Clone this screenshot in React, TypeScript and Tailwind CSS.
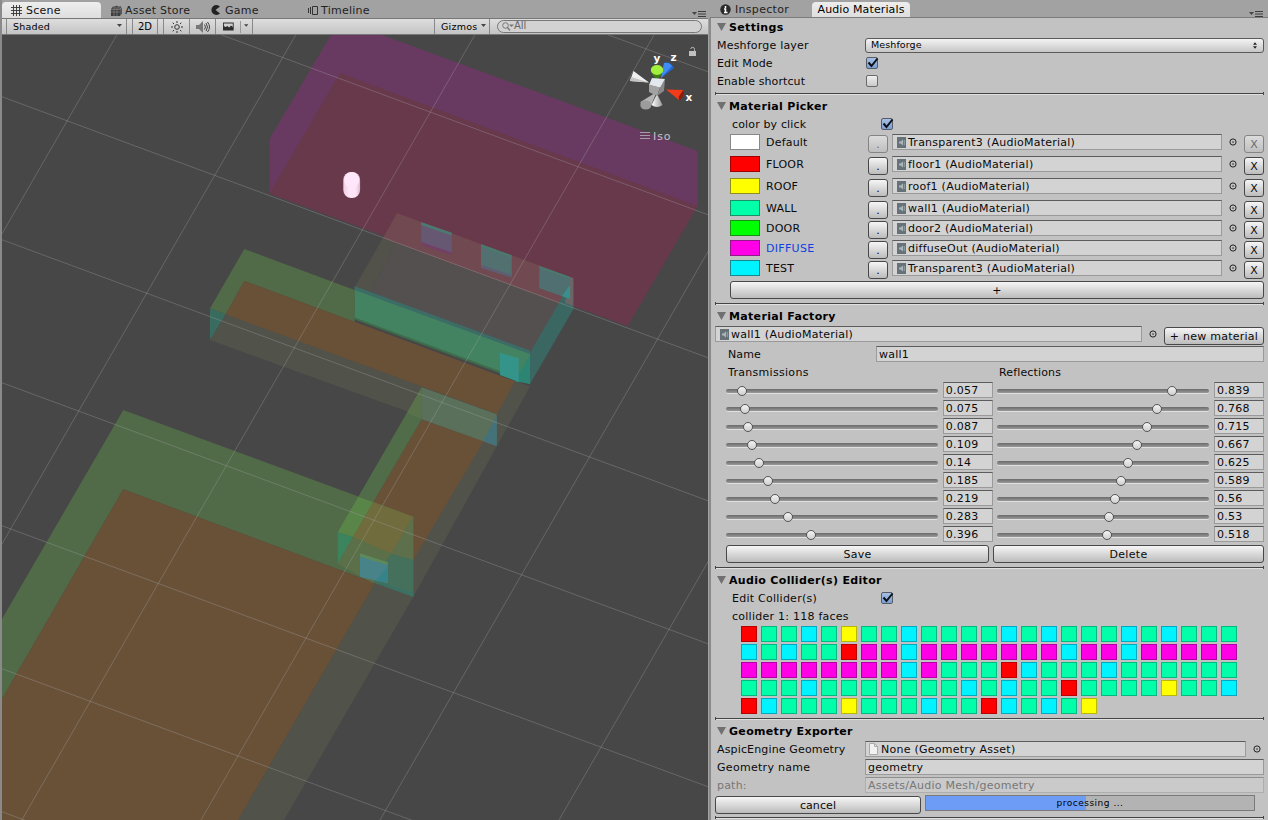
import React from "react";

const poly = (pts: string, fill: string, key?: React.Key) => <polygon key={key} points={pts} fill={fill} />;

const SHAPES: [string, string][] = [
  ["331,35 382,35 697.5,151 697.5,206 627.5,326 269.5,193.5 269.5,139", "#693a61"],
  ["340,73 697.5,206 627.5,326 269.5,193.5", "#68384b"],
  ["210,340 226,314 496.7,414 484,442 421,419 413,413.5", "#51524a"],
  ["515,381 530,386.5 413.3,596.7 284,820 238,820 375,583", "#51524a"],
  ["244.3,249 354.7,290 354.7,322 244.3,281 225.7,314.3 210,308.5", "#516b48"],
  ["244.3,281 515,381.3 496.7,414 225.7,314.3", "#695138"],
  ["210,308.5 225.7,314.3 210,340", "#3a6b5f"],
  ["397,213 573.3,278 573.3,309.3 383,238", "#704a50"],
  ["383,238 396,243 371,292 354.7,287", "#52514a"],
  ["396,243 568,306 530,352.7 371,292", "#545050"],
  ["573.3,280 573.3,309.3 530,384 530,352.7 563,296", "#3b6762"],
  ["570,277 573.3,278 573.3,306 565,303", "#6a6567"],
  ["354.7,286.7 530,352.7 530,384 354.7,319", "#438361"],
  ["354.7,286 530,350.5 530,354 354.7,290", "#3d6b65"],
  ["354.7,317.5 530,382 530,384.5 354.7,319.5", "#3e6c4a"],
  ["530,354.5 530,384 515,381.3", "#2c8573"],
  ["421.3,222.3 451.7,232.7 451.7,254.7 421.3,244", "#665872"],
  ["421.3,222.3 451.7,232.7 451.7,235.5 421.3,225", "#4c7a70"],
  ["421.3,242 451.7,252.5 451.7,255 421.3,245", "#743f66"],
  ["481,244.3 511.7,255.3 511.7,277.3 481,267.3", "#51706f"],
  ["481,244.3 511.7,255.3 511.7,257.5 481,246.5", "#4a7a6e"],
  ["481,265 511.7,275 511.7,277.5 481,268", "#5e5d72"],
  ["539.3,266 570,277 570,299 539.3,288.3", "#4f6f70"],
  ["539.3,266 570,277 570,279 539.3,268", "#4a7a6e"],
  ["570,285 570,299 562,296", "#38908d"],
  ["500,352.7 518.7,358.3 518.7,382 500,375", "#35948a"],
  ["421.7,419.3 496.7,446 483.3,441.7 413.3,560 375,583 353,537", "#695138"],
  ["421.7,387.3 421.7,419.3 353,537 337.7,532.3", "#506c48"],
  ["421.7,387.3 421.7,419.3 407,413", "#59724b"],
  ["421.7,387.3 496.7,414.3 496.7,446 421.7,419.3", "#5a705b"],
  ["496.7,416 496.7,446 483,441", "#44727a"],
  ["123.3,410 413.3,516.7 413.3,596.7 375,583 123.3,489.3 2,699 2,619", "#516a48"],
  ["123.3,489.3 375,583 238,820 2,820 2,699", "#695138"],
  ["358.3,496.7 373.3,502 353,537 337.7,532.3", "#5a8548"],
  ["373.3,502 413.3,516.7 391,554 353,537", "#706c3d"],
  ["413.3,516.7 413.3,560 391,554", "#5d704b"],
  ["391,554 413.3,560 413.3,596.7 373,582", "#44705c"],
  ["375,581 413.3,593 413.3,596.7 378,584", "#3b7064"],
  ["337.7,532.3 353,537 337.7,564", "#3b845d"],
  ["353,537 391,553.5 373,583 337.7,564", "#5b6f49"],
  ["360,553.5 387.7,562.3 387.7,583 360,577", "#48838a"],
  ["360,553.5 387.7,562.3 387.7,565 360,556.5", "#5f8a58"],
  ["387.7,566 387.7,583 376,581", "#36848a"],
];

function SceneView() {
  return (
    <svg className="block" width="706" height="785" viewBox="2 35 706 785">
      <defs>
        <linearGradient id="cap" x1="0" x2="1"><stop offset="0" stopColor="#f0cfe4" /><stop offset=".35" stopColor="#ffe6f9" /><stop offset=".75" stopColor="#ffe4f6" /><stop offset="1" stopColor="#d9bccd" /></linearGradient>
        <linearGradient id="grey" x1="0" x2="1"><stop offset="0" stopColor="#fff" /><stop offset="1" stopColor="#9a9a9a" /></linearGradient>
      </defs>
      <rect x="2" y="35" width="706" height="785" fill="#474747" />
      {SHAPES.map(([p, f], i) => poly(p, f, i))}
      <g stroke="#a8a8a8" strokeOpacity=".33" strokeWidth="1">
        {[-190, -47, 96, 239, 382, 525, 668, 811].map((c) => <line key={c} x1="0" y1={c} x2="710" y2={c + 262.5} />)}
        {[116.7, 295.7, 474.8, 654, 833, 1012].map((x) => <line key={x} x1={x} y1="35" x2={x - 453} y2="820" />)}
      </g>
      <rect x="343.3" y="172" width="16.8" height="26" rx="8" fill="url(#cap)" />
      <ellipse cx="351.7" cy="180" rx="7.5" ry="7.8" fill="#ffe6fa" />
      {/* orientation gizmo */}
      <polygon points="630,81 633.5,71 649,82.500" fill="#f0f0f0" />
      <polygon points="630,81 631,77 649,82.500" fill="#c4c4c4" />
      <polygon points="655,93 640.500,102 642,108 650,108 655,96" fill="#b4b4b4" />
      <ellipse cx="645.8" cy="105" rx="5.500" ry="4.500" fill="#9c9c9c" />
      <path d="M657 94 L651.500 105 Q657 109 662.500 105Z" fill="url(#grey)" />
      <path d="M661 78 L664 63 Q670 61 674 68 Z" fill="#2567cc" />
      <path d="M661 78 L664 63 Q669 61.500 672 66Z" fill="#3f8cf5" />
      <path d="M652 74 L657 80 L662 74Z" fill="#3f7f10" />
      <ellipse cx="657" cy="70" rx="6.200" ry="5" fill="#a0f03c" />
      <polygon points="652,78 665,79 661,88 649,85" fill="#e2e8ee" />
      <polygon points="649,84.500 660,87.500 657,96 649,92" fill="#a2a2a2" />
      <polygon points="660,87.500 665,79 664,91 657,96" fill="#8a8a8a" />
      <path d="M666 89.500 L684 90 L679 100 Z" fill="#f03c18" />
      <path d="M683.500 89.500 Q685 96 679.500 100.500 L678.500 97Z" fill="#8c1c08" />
      <g fill="#fff" fontFamily="DejaVu Sans" fontWeight="700" fontSize="10.5">
        <text x="653.5" y="62">y</text><text x="670.5" y="61">z</text><text x="685.500" y="101">x</text>
      </g>
      <path d="M640 132.500h10M640 135.500h10M640 138.500h10" fill="none" stroke="#b5b5b5" strokeOpacity=".8" />
      <path d="M694.500 51.500v-2a1.900 1.900 0 0 0-3.800-.5" fill="none" stroke="#b5b5b5" />
      <rect x="689" y="51" width="7" height="5" fill="#c0c0c0" />
      <text x="653" y="140" fill="#c9c0c8" fontFamily="DejaVu Sans" fontSize="11" letterSpacing=".9">Iso</text>
    </svg>
  );
}

const MenuGlyph = () => (
  <svg width="14" height="6" viewBox="0 0 14 6"><path d="M0 1h5l-2.500 3z" fill="#444" /><path d="M6 .5h8M6 3h8M6 5.500h8" stroke="#3c3c3c" /></svg>
);

const Caret = () => <svg className="mb-[2px]" width="5" height="3" viewBox="0 0 5 3"><path d="M0 0h5l-2.500 3z" fill="#444" /></svg>;

function ScenePane() {
  return (
    <section className="w-[710px] flex flex-col shrink-0 border-l-2 border-[#8a8a8a]">
      <div className="h-[18px] flex items-end bg-[#a2a2a2] text-[#111] tracking-[0.25px]">
        <div className="w-[99px] h-4 pl-[9px] flex items-center gap-1 rounded-t-sm bg-linear-to-b from-[#eee] to-[#dedede]">
          <svg width="11" height="11" viewBox="0 0 11 11" stroke="#333" strokeWidth=".9"><path d="M2.500 0v11M5.500 0v11M8.500 0v11M0 2.500h11M0 5.500h11M0 8.500h11" /></svg>
          <span>Scene</span>
        </div>
        <div className="w-[101px] h-4 pl-[10px] flex items-center gap-[3px] text-[#222]">
          <svg width="11" height="11" viewBox="0 0 11 11"><path d="M0 4.500h9V11H0z" fill="#3c3c3c" /><path d="M9 4.500l2-2V8.500L9 11z" fill="#555" /><path d="M0 4l2-2.500h2L5.500 .5 7 1.500h3.500L9 4z" fill="#444" /><path d="M0 7h9M3 4.500V11M6 4.500V11M2 3h7" stroke="#909090" strokeWidth=".6" /></svg>
          <span>Asset Store</span>
        </div>
        <div className="w-[95px] h-4 pl-[9px] flex items-center gap-1 text-[#222]">
          <svg width="10" height="10" viewBox="0 0 10 10"><path d="M9 1.500A5 5 0 1 0 9 8.500L4.500 5z" fill="#222" /></svg>
          <span>Game</span>
        </div>
        <div className="h-4 pl-[11px] flex items-center gap-[3px] text-[#222]">
          <svg width="10" height="9" viewBox="0 0 10 9" fill="none" stroke="#333"><path d="M.5 2v5M2.500 1v7M4.500 .5h5v8h-5z" /></svg>
          <span>Timeline</span>
        </div>
        <div className="ml-auto mr-1 mb-px h-[6px] flex"><MenuGlyph /></div>
      </div>
      <div className="h-[17px] mr-[2px] flex items-stretch border-t border-b border-t-[#777] border-b-[#777] bg-linear-to-b from-[#dedede] to-[#c4c4c4] text-[9.5px] text-black">
        <div className="w-[5px] border-r border-[#888]" />
        <div className="w-[120px] pl-[6px] pr-1 flex items-center justify-between border-r border-[#888]"><span className="tracking-[0.2px]">Shaded</span><Caret /></div>
        <div className="w-[6px] border-r border-[#888]" />
        <div className="w-[25px] flex items-center justify-center border-r border-[#888] text-[10px]">2D</div>
        <div className="w-[6px] border-r border-[#888]" />
        <div className="w-[26px] flex items-center justify-center border-r border-[#888]">
          <svg width="12" height="12" viewBox="0 0 12 12" fill="none" stroke="#333"><circle cx="6" cy="6" r="2.300" /><path d="M6 0v2M6 10v2M0 6h2M10 6h2M1.700 1.700l1.300 1.300M9 9l1.300 1.300M1.700 10.300L3 9M9 3l1.300-1.300" /></svg>
        </div>
        <div className="w-[26px] flex items-center justify-center border-r border-[#888]">
          <svg width="14" height="12" viewBox="0 0 14 12"><path d="M0 4h3l4-4v12L3 8H0z" fill="#777" /><path d="M8.500 3.500q2 2.500 0 5M10 2q3 4 0 8M11.500 1q4 5 0 10" fill="none" stroke="#444" /></svg>
        </div>
        <div className="w-[37px] pl-[7px] pr-1 flex items-center border-r border-[#888]">
          <svg width="12" height="9" viewBox="0 0 12 9"><path d="M0 0h12v9H0z" fill="#2c2c2c" /><path d="M1 1h10v4L9 3.500 7 5.500 5 4 3 5 1 4z" fill="#d0d0d0" /></svg>
          <span className="ml-[6px] mr-[3px] h-3 w-px bg-[#999]" /><Caret />
        </div>
        <div className="ml-auto w-[56px] pl-[6px] pr-[3px] flex items-center justify-between border-l border-r border-[#888]"><span className="tracking-[0.25px]">Gizmos</span><Caret /></div>
        <div className="ml-[7px] mr-[6px] my-px w-[205px] pl-1 flex items-center rounded-full border border-[#777] bg-[#d2d2d2] text-[10px] text-[#666]">
          <svg width="12" height="9" viewBox="0 0 12 9"><circle cx="3.500" cy="3.500" r="2.800" fill="none" stroke="#777" /><path d="M5.500 5.500L8 8.500" stroke="#777" strokeWidth="1.300" /><path d="M7 2.500h5L9.500 5z" fill="#777" /></svg>
          <span className="-mt-px">All</span>
        </div>
      </div>
      <SceneView />
    </section>
  );
}

const Divider = ({ className = "" }: { className?: string }) => (
  <div className={`h-[3px] shrink-0 mx-1 border-x border-[#444] flex flex-col justify-center ${className}`}><div className="h-px bg-[#444]" /><div className="h-px bg-[#e0e0e0]" /></div>
);

const Heading = ({ children }: { children: React.ReactNode }) => (
  <div className="h-[18px] shrink-0 pl-[6px] flex items-center gap-[3px] font-bold text-black">
    <svg width="9" height="8" viewBox="0 0 9 8"><path d="M0 0h9L4.500 8z" fill="#707070" /></svg>
    <span className="tracking-[0.33px]">{children}</span>
  </div>
);

const Check = ({ on }: { on?: boolean }) => (
  <span className={on ? "relative block size-3 rounded-[2px] border border-[#555c68] bg-linear-to-b from-[#a7bfe2] to-[#7c9fd3]" : "block size-3 rounded-[2px] border border-[#6a6a6a] bg-linear-to-b from-[#f0f0f0] to-[#cacaca]"}>
    {on && <svg className="absolute left-0 -top-px" width="12" height="11" viewBox="0 0 12 11"><path d="M1.500 5.500L4.500 9L10.500 1.500" fill="none" stroke="#0a0f18" strokeWidth="2" /></svg>}
  </span>
);

const Field = ({ children, className = "" }: { children: React.ReactNode; className?: string }) => (
  <div className={`h-4 flex items-center pl-[2px] border border-[#9a9a9a] border-t-[#5c5c5c] bg-[#d3d3d3] text-[#0a0a0a] tracking-[0.25px] ${className}`}>{children}</div>
);

const Button = ({ children, className = "" }: { children: React.ReactNode; className?: string }) => (
  <div className={`h-[18px] flex items-center justify-center rounded-[3px] border border-[#484848] bg-linear-to-b from-[#f6f6f6] to-[#bcbcbc] text-[#0a0a0a] ${className}`}>{children}</div>
);

const AssetIcon = () => (
  <svg className="shrink-0 mr-[2px] ml-[2px]" width="9" height="11" viewBox="0 0 9 11"><rect width="9" height="11" fill="#667278" /><path d="M2 4.500h1.500L6 2.500v6L3.500 6.500H2z" fill="#a8b6ba" /><path d="M7.300 3v5" stroke="#94a2a7" /></svg>
);

const Target = () => (
  <svg width="8" height="8" viewBox="0 0 8 8"><circle cx="4" cy="4" r="3.100" fill="none" stroke="#222" /><rect x="3.400" y="3.400" width="1.300" height="1.300" fill="#222" /></svg>
);

const MATERIALS = [
  { name: "Default", asset: "Transparent3", swatch: "bg-white border-[#888]", h: "h-[22px]", off: true },
  { name: "FLOOR", asset: "floor1", swatch: "bg-[#ff0000] border-[#a00000]", h: "h-[22px]" },
  { name: "ROOF", asset: "roof1", swatch: "bg-[#ffff00] border-[#8f8f20]", h: "h-[22px]" },
  { name: "WALL", asset: "wall1", swatch: "bg-[#00ffa8] border-[#18906a]", h: "h-5" },
  { name: "DOOR", asset: "door2", swatch: "bg-[#00ff00] border-[#189018]", h: "h-5" },
  { name: "DIFFUSE", asset: "diffuseOut", swatch: "bg-[#ff00e6] border-[#901888]", h: "h-5", sel: true },
  { name: "TEST", asset: "Transparent3", swatch: "bg-[#00f4ff] border-[#188890]", h: "h-5" },
];

const TRANSMISSIONS = [0.057, 0.075, 0.087, 0.109, 0.14, 0.185, 0.219, 0.283, 0.396];
const REFLECTIONS = [0.839, 0.768, 0.715, 0.667, 0.625, 0.589, 0.56, 0.53, 0.518];

const Slider = ({ value }: { value: number }) => (
  <div className="relative w-[212px] h-4">
    <div className="mt-[7px] h-[4px] rounded-full bg-linear-to-b from-[#6a6a6a] to-[#9a9a9a] shadow-[0_1px_0_#e0e0e0]" />
    <div className="absolute top-1 size-[10px] rounded-full border border-[#555] bg-linear-to-b from-[#f4f4f4] to-[#cfcfcf]" style={{ left: Math.floor(4.6 + value * 203.5 - 5) }} />
  </div>
);

const FACES = [
  "RGGCGYGGCGGGGCGCGGGCGCGGG",
  "CGCGGRMMCMMMMMMMCMMCMMMMM",
  "MMMMMMMMCMGGGRCGGGCGGGGGG",
  "GGGCGGGGGGGCGCGGRGGGGYGGC",
  "RCGGGYGGGCGGRCGCGY",
];
const FACE_COLOR: Record<string, string> = {
  R: "bg-[#ff0000] border-[#b80000]",
  G: "bg-[#00ffa8] border-[#00b880]",
  C: "bg-[#00f4ff] border-[#00a8c0]",
  Y: "bg-[#ffff00] border-[#b8b800]",
  M: "bg-[#ff00e6] border-[#b000a0]",
};

function MaterialPane() {
  return (
    <section className="w-[558px] flex flex-col shrink-0">
      <div className="h-[18px] flex items-end border-b border-[#7c7c7c] bg-[#a2a2a2] text-[#222]">
        <div className="w-[102px] h-[15px] pl-[10px] flex items-center gap-1">
          <svg width="11" height="11" viewBox="0 0 11 11"><circle cx="5.500" cy="5.500" r="5.200" fill="#2a2a2a" /><path d="M5.500 2v2M4 5h1.500v3M4 8.500h3.500" stroke="#fff" strokeWidth="1.500" fill="none" /></svg>
          <span className="tracking-[0.3px]">Inspector</span>
        </div>
        <div className="w-[98px] h-[15px] flex items-center justify-center rounded-t-sm bg-linear-to-b from-[#ededed] to-[#dedede] text-black tracking-[0.12px]">Audio Materials</div>
        <div className="ml-auto mr-[5px] mb-0 h-[6px] flex"><MenuGlyph /></div>
      </div>
      <div className="flex-1 flex flex-col border-l-2 border-[#8a8a8a] bg-[#c2c2c2] -ml-px text-[#0a0a0a] tracking-[0.1px]">
        <Heading>Settings</Heading>
        <div className="h-[18px] shrink-0 pl-[6px] pr-1 flex items-center">
          <span className="w-[148px] tracking-[0.2px]">Meshforge layer</span>
          <div className="flex-1 h-[15px] px-[5px] flex items-center justify-between rounded-[3px] border border-[#5a5a5a] bg-linear-to-b from-[#f4f4f4] to-[#c6c6c6] text-[9.5px] text-black">
            <span className="tracking-[0.1px]">Meshforge</span>
            <svg className="mr-px" width="4" height="7" viewBox="0 0 5 8"><path d="M0 3h5L2.500 0zM0 5h5L2.500 8z" fill="#222" /></svg>
          </div>
        </div>
        <div className="h-[18px] shrink-0 pl-[6px] flex items-center"><span className="w-[149px]">Edit Mode</span><Check on /></div>
        <div className="h-[18px] shrink-0 pl-[6px] flex items-center"><span className="w-[149px]">Enable shortcut</span><Check /></div>
        <Divider className="mt-[2px] mb-[2px]" />
        <Heading>Material Picker</Heading>
        <div className="h-[18px] shrink-0 pl-[21px] flex items-center"><span className="w-[149px] tracking-[0.15px]">color by click</span><Check on /></div>
        <div className="mt-px flex flex-col shrink-0 pl-[19px] pr-1">
          {MATERIALS.map((m) => (
            <div key={m.name} className={`flex items-start ${m.h}`}>
              <div className={`w-[30px] h-4 border ${m.swatch}`} />
              <div className={m.sel ? "w-[108px] pl-[6px] leading-[17px] tracking-[0.3px] text-[#1040e0]" : "w-[108px] pl-[6px] leading-[17px] tracking-[0.2px]"}>{m.name}</div>
              <Button className={m.off ? "w-5 mt-px opacity-50" : "w-5 mt-px"}>.</Button>
              <Field className="ml-1 w-[330px]"><AssetIcon />{m.asset} (AudioMaterial)</Field>
              <div className="w-[22px] h-4 flex items-center justify-center"><Target /></div>
              <Button className={m.off ? "w-5 mt-px opacity-50" : "w-5 mt-px"}>X</Button>
            </div>
          ))}
          <Button className="mt-px">+</Button>
        </div>
        <Divider className="mt-[3px] mb-[2px]" />
        <Heading>Material Factory</Heading>
        <div className="h-5 shrink-0 mt-px pl-1 pr-1 flex items-start">
          <Field className="w-[427px]"><AssetIcon />wall1 (AudioMaterial)</Field>
          <div className="w-[22px] h-4 flex items-center justify-center"><Target /></div>
          <Button className="mt-px w-[100px] tracking-[0.25px]">+ new material</Button>
        </div>
        <div className="h-[18px] shrink-0 pl-[17px] pr-1 flex items-start"><span className="w-[148px] leading-[17px]">Name</span><Field className="flex-1">wall1</Field></div>
        <div className="h-[18px] shrink-0 pl-[17px] flex items-start leading-[17px] tracking-[0.3px]"><span className="w-[271px]">Transmissions</span><span className="tracking-[0.15px]">Reflections</span></div>
        {TRANSMISSIONS.map((t, i) => (
          <div key={i} className="h-[18px] shrink-0 pl-[15px] pr-1 flex items-start justify-between">
            <Slider value={t} /><Field className="w-[50px]">{t}</Field><Slider value={REFLECTIONS[i]} /><Field className="w-[50px]">{REFLECTIONS[i]}</Field>
          </div>
        ))}
        <div className="mt-px shrink-0 pl-[15px] pr-1 flex gap-1 tracking-[0.3px]"><Button className="w-[263px]">Save</Button><Button className="flex-1">Delete</Button></div>
        <Divider className="mt-[3px] mb-[2px]" />
        <Heading>Audio Collider(s) Editor</Heading>
        <div className="h-[18px] shrink-0 pl-[21px] flex items-center"><span className="w-[149px] tracking-[0.25px]">Edit Collider(s)</span><Check on /></div>
        <div className="h-[18px] shrink-0 pl-[21px] flex items-center tracking-[0.25px]">collider 1: 118 faces</div>
        <div className="shrink-0 mt-px pl-[30px] flex flex-col gap-[2px]">
          {FACES.map((row, i) => (
            <div key={i} className="flex gap-1">{row.split("").map((c, j) => <div key={j} className={`size-4 border ${FACE_COLOR[c]}`} />)}</div>
          ))}
        </div>
        <Divider className="mt-[3px] mb-[2px]" />
        <Heading>Geometry Exporter</Heading>
        <div className="h-[18px] shrink-0 mt-px pl-[6px] flex items-start">
          <span className="w-[148px] leading-[17px] tracking-[0.15px]">AspicEngine Geometry</span>
          <Field className="w-[381px]">
            <svg className="ml-px mr-[3px]" width="9" height="12" viewBox="0 0 9 12"><path d="M.5 .5h5l3 3v8h-8z" fill="#f2f2f2" stroke="#aaa" /><path d="M5.500 .5v3h3" fill="none" stroke="#aaa" /></svg>None (Geometry Asset)
          </Field>
          <div className="w-[22px] h-4 flex items-center justify-center"><Target /></div>
        </div>
        <div className="h-[18px] shrink-0 pl-[6px] pr-1 flex items-start"><span className="w-[148px] leading-[17px] tracking-[0.3px]">Geometry name</span><Field className="flex-1">geometry</Field></div>
        <div className="h-[18px] shrink-0 pl-[6px] pr-1 flex items-start text-[#777]"><span className="w-[148px] leading-[17px] tracking-[0.2px]">path:</span><div className="flex-1 h-4 pl-[2px] flex items-center border border-[#aeaeae] border-t-[#8f8f8f] bg-[#cacaca] tracking-[0.25px]">Assets/Audio Mesh/geometry</div></div>
        <div className="shrink-0 pl-1 flex items-start">
          <Button className="w-[206px] mt-px">cancel</Button>
          <div className="ml-1 w-[330px] h-4 grid border border-[#7a7a7a] bg-[#b3b3b3] text-[9px] text-black">
            <div className="[grid-area:1/1] w-[160px] bg-[#6c9cf6]" />
            <div className="[grid-area:1/1] flex items-center justify-center pt-px tracking-[0.5px]">processing ...</div>
          </div>
        </div>
        <Divider className="mt-[2px]" />
      </div>
    </section>
  );
}

export default function App() {
  return (
    <div className="w-[1268px] h-[820px] flex overflow-hidden bg-[#a2a2a2] text-[11px] leading-none whitespace-nowrap font-['DejaVu_Sans','Verdana',sans-serif]">
      <ScenePane />
      <MaterialPane />
    </div>
  );
}
